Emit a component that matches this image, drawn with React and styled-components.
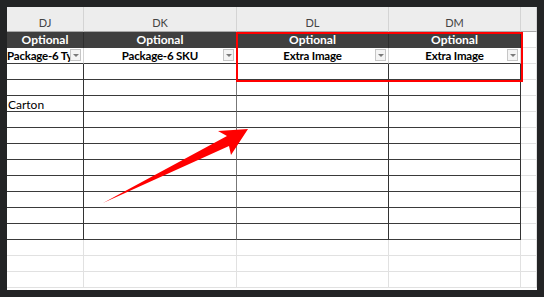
import styled, { createGlobalStyle } from 'styled-components'

const GlobalStyle = createGlobalStyle`
  html, body {
    margin: 0;
    padding: 0;
    background: #232425;
  }
  body {
    font-family: Lato, "Liberation Sans", sans-serif;
  }
`;

const columns = [
    {key: 'DJ', width: 77, line: '#333', header: 'Package-6 Ty', align: 'left'},
    {key: 'DK', width: 153, line: '#777', header: 'Package-6 SKU', align: 'center'},
    {key: 'DL', width: 152, line: '#333', header: 'Extra Image', align: 'center'},
    {key: 'DM', width: 132, line: '#333', header: 'Extra Image', align: 'center'},
];

const dataRows = ['', '', 'Carton', '', '', '', '', '', '', '', ''];
const blankRows = 3;

const App = () => {
    return(
        <Frame>
            <GlobalStyle/>
            <Sheet>
                <Grid>
                    {columns.map(col => (
                        <ColHeader key={col.key}>{col.key}</ColHeader>
                    ))}
                    <ColHeader/>

                    {columns.map(col => (
                        <GroupCell key={col.key}>Optional</GroupCell>
                    ))}
                    <PlainCell/>

                    {columns.map(col => (
                        <FieldCell key={col.key} $align={col.align}>
                            <FieldLabel>{col.header}</FieldLabel>
                            <FilterButton><Caret/></FilterButton>
                        </FieldCell>
                    ))}
                    <PlainCell/>

                    {dataRows.map((text, r) => (
                        <Row key={r}>
                            {columns.map((col, c) => (
                                <DataCell key={col.key} $line={col.line}>{c === 0 ? text : ''}</DataCell>
                            ))}
                            <PlainCell/>
                        </Row>
                    ))}

                    {Array.from({length: blankRows}).map((_, r) => (
                        <Row key={'b' + r}>
                            {columns.map(col => <PlainCell key={col.key}/>)}
                            <PlainCell/>
                        </Row>
                    ))}
                </Grid>

                <Highlight/>
                <Arrow viewBox="7 7 530 283" width="530" height="283">
                    <polygon
                        points="103,203 227,136 218,131 248,129 231,155 229,146"
                        fill="#ff0000"
                    />
                </Arrow>
            </Sheet>
        </Frame>
    )
};

const Frame = styled.div`
  width: 544px;
  height: 297px;
  box-sizing: border-box;
  padding: 7px;
  background: #232425;
`;
const Sheet = styled.div`
  position: relative;
  width: 530px;
  height: 283px;
  overflow: hidden;
  background: #fff;
`;
const Grid = styled.div`
  display: grid;
  grid-template-columns: 77px 153px 152px 132px 16px;
  grid-auto-rows: 16px;
  grid-template-rows: 25px;
  font-size: 12px;
  color: #000;
`;
const Row = styled.div`
  display: contents;
`;
const ColHeader = styled.div`
  box-sizing: border-box;
  background: #ededed;
  border-right: 1px solid #d4d4d4;
  border-bottom: 1px solid #a9a9a9;
  color: #444;
  font-size: 11px;
  display: flex;
  align-items: flex-end;
  justify-content: center;
  padding-bottom: 2px;
`;
const GroupCell = styled.div`
  box-sizing: border-box;
  background: #3f3f3f;
  border-right: 1px solid #2e2e2e;
  color: #fff;
  font-weight: 700;
  font-size: 12px;
  line-height: 16px;
  text-align: center;
`;
const PlainCell = styled.div`
  box-sizing: border-box;
  background: #fff;
  border-right: 1px solid #e1e1e1;
  border-bottom: 1px solid #e1e1e1;
`;
const FieldCell = styled.div`
  position: relative;
  box-sizing: border-box;
  border-right: 1px solid #d4d4d4;
  border-bottom: 1px solid #3a3a3a;
  font-weight: 700;
  font-size: 11.5px;
  letter-spacing: -0.2px;
  line-height: 16px;
  text-align: ${p => p.$align};
  overflow: hidden;
  white-space: nowrap;
`;
const FieldLabel = styled.span`
  display: block;
`;
const FilterButton = styled.div`
  position: absolute;
  right: 2px;
  top: 1px;
  width: 11px;
  height: 12px;
  box-sizing: border-box;
  background: #f4f4f4;
  border: 1px solid #c6c6c6;
  display: flex;
  align-items: center;
  justify-content: center;
`;
const Caret = styled.div`
  width: 0;
  height: 0;
  border-left: 3px solid transparent;
  border-right: 3px solid transparent;
  border-top: 3px solid #7a7a7a;
`;
const DataCell = styled.div`
  box-sizing: border-box;
  border-right: 1px solid ${p => p.$line};
  border-bottom: 1px solid #3a3a3a;
  font-size: 12px;
  line-height: 17px;
  padding-left: 1px;
  white-space: nowrap;
  overflow: hidden;
`;
const Highlight = styled.div`
  position: absolute;
  left: 229px;
  top: 25px;
  width: 287px;
  height: 50px;
  box-sizing: border-box;
  border: 2px solid #f00;
  pointer-events: none;
`;
const Arrow = styled.svg`
  position: absolute;
  left: 0;
  top: 0;
  pointer-events: none;
`;

export default App;
